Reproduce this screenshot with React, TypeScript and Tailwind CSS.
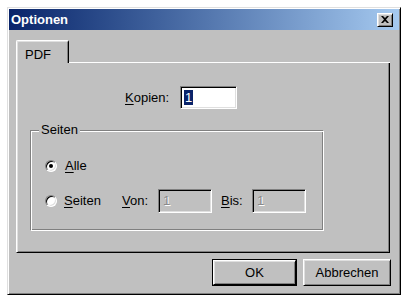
import React from "react";

const font = "font-['Liberation_Sans',Arial,sans-serif]";

const raised =
  "border border-t-white border-l-white border-r-black border-b-black shadow-[inset_1px_1px_0_#dfdfdf,inset_-1px_-1px_0_#808080]";
const sunken =
  "border border-t-[#808080] border-l-[#808080] border-r-white border-b-white shadow-[inset_1px_1px_0_#000,inset_-1px_-1px_0_#dfdfdf]";

function Mn({ k, rest }: { k: string; rest: string }) {
  return (
    <span>
      <span className="underline underline-offset-2">{k}</span>
      {rest}
    </span>
  );
}

function Radio({ checked }: { checked?: boolean }) {
  return (
    <div
      className={`w-[12px] h-[12px] rounded-full bg-white flex items-center justify-center ${sunken}`}
    >
      {checked && <div className="w-[4px] h-[4px] rounded-full bg-black" />}
    </div>
  );
}

function DisabledInput() {
  return (
    <div
      className={`w-[54px] h-[24px] bg-[#c0c0c0] flex items-center pl-[4px] text-[#8a8a8a] [text-shadow:1px_1px_0_#fff] ${sunken}`}
    >
      1
    </div>
  );
}

function Button({
  children,
  width,
  isDefault,
}: {
  children: React.ReactNode;
  width: string;
  isDefault?: boolean;
}) {
  if (isDefault) {
    return (
      <div className={`${width} h-[27px] border border-black`}>
        <div
          className={`w-full h-full flex items-center justify-center bg-[#c0c0c0] ${raised}`}
        >
          {children}
        </div>
      </div>
    );
  }
  return (
    <div
      className={`${width} h-[27px] flex items-center justify-center bg-[#c0c0c0] ${raised}`}
    >
      {children}
    </div>
  );
}

export default function App() {
  return (
    <div className={`w-[404px] h-[298px] bg-white pt-[7px] pl-[7px] ${font} text-[13px] text-black`}>
      <div
        className={`w-[394px] h-[288px] bg-[#c0c0c0] flex flex-col border border-t-[#dfdfdf] border-l-[#dfdfdf] border-r-black border-b-black shadow-[inset_1px_1px_0_#fff,inset_-1px_-1px_0_#808080] p-[1px]`}
      >
        {/* title bar */}
        <div className="h-[21px] flex items-center justify-between bg-gradient-to-r from-[#0a246a] to-[#a6caf0] pl-[2px] pr-[6px]">
          <span className="text-white font-bold text-[13px] leading-none">Optionen</span>
          <div className={`w-[16px] h-[14px] bg-[#c0c0c0] flex items-center justify-center ${raised}`}>
            <svg width="8" height="7" viewBox="0 0 8 7">
              <path d="M0 0h2l2 2 2-2h2L5 3.5 8 7H6L4 5 2 7H0l3-3.5z" fill="#000" />
            </svg>
          </div>
        </div>

        <div className="flex flex-col pt-[10px] px-[7px]">
          {/* tab strip */}
          <div className="w-[374px] h-[23px] flex items-end">
            <div className="w-[53px] h-[23px] border-t border-l border-r border-t-white border-l-white border-r-black rounded-t-[2px] shadow-[inset_1px_1px_0_#dfdfdf,inset_-1px_0_0_#808080] pl-[8px] pt-[4px]">
              PDF
            </div>
            <div className="flex-1 h-[1px] bg-white" />
          </div>

          {/* panel */}
          <div className="w-[374px] h-[190px] flex flex-col border-l border-r border-b border-l-white border-r-black border-b-black shadow-[inset_1px_0_0_#dfdfdf,inset_-1px_-1px_0_#808080]">
            <div className="mt-[23px] ml-[108px] flex items-center">
              <span className="w-[50px]">
                <Mn k="K" rest="opien:" />
              </span>
              <div className={`ml-[5px] w-[57px] h-[23px] bg-white flex items-center pl-[3px] ${sunken}`}>
                <span className="bg-[#0a246a] text-white px-[1px] leading-[15px]">1</span>
              </div>
            </div>

            <div className="relative mt-[21px] ml-[13px] w-[294px] h-[101px] border border-t-[#808080] border-l-[#808080] border-r-white border-b-white shadow-[inset_1px_1px_0_#fff,inset_-1px_-1px_0_#808080] pt-[23px] pl-[14px] flex flex-col gap-[11px]">
              <span className="absolute left-[8px] top-[-9px] bg-[#c0c0c0] px-[2px] leading-[16px]">
                Seiten
              </span>
              <div className="h-[24px] flex items-center">
                <Radio checked />
                <span className="ml-[8px]">
                  <Mn k="A" rest="lle" />
                </span>
              </div>
              <div className="h-[24px] flex items-center">
                <Radio />
                <span className="ml-[7px] w-[50px]">
                  <Mn k="S" rest="eiten" />
                </span>
                <span className="ml-[8px] w-[36px]">
                  <Mn k="V" rest="on:" />
                </span>
                <DisabledInput />
                <span className="ml-[9px] w-[31px]">
                  <Mn k="B" rest="is:" />
                </span>
                <DisabledInput />
              </div>
            </div>
          </div>

          {/* buttons */}
          <div className="mt-[6px] w-[375px] flex justify-end gap-[6px]">
            <Button width="w-[85px]" isDefault>
              OK
            </Button>
            <Button width="w-[88px]">Abbrechen</Button>
          </div>
        </div>
      </div>
    </div>
  );
}
